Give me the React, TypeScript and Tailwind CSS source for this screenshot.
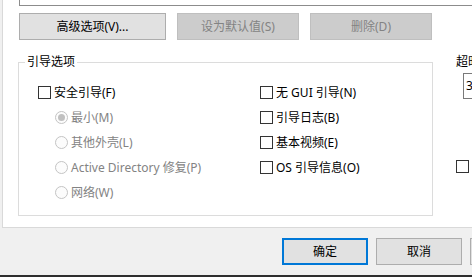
import React from "react";

const FONT = "font-['Noto_Sans','Noto_Sans_CJK_SC',sans-serif] text-[12px] leading-[16px]";

function Checkbox({ label }: { label: string }) {
  return (
    <div className="flex h-[25px] items-center gap-[3px] text-black">
      <span className="inline-block h-[13px] w-[13px] shrink-0 border border-[#333333] bg-white" />
      <span className="whitespace-nowrap">{label}</span>
    </div>
  );
}

function Radio({ label, checked }: { label: string; checked?: boolean }) {
  return (
    <div className="flex h-[25px] items-center gap-[3px] pl-[17px] text-[#838383]">
      <span className="flex h-[13px] w-[13px] shrink-0 items-center justify-center rounded-full border border-[#c4c4c4] bg-[#fcfcfc]">
        {checked && <span className="h-[7px] w-[7px] rounded-full bg-[#c0c0c0]" />}
      </span>
      <span className="whitespace-nowrap">{label}</span>
    </div>
  );
}

function Button({ label, disabled, w }: { label: string; disabled?: boolean; w: string }) {
  return (
    <div
      className={`flex h-[27px] shrink-0 items-center justify-center border ${w} ${
        disabled ? "border-[#bfbfbf] bg-[#cccccc] text-[#838383]" : "border-[#adadad] bg-[#e1e1e1] text-black"
      }`}
    >
      {label}
    </div>
  );
}

export default function App() {
  return (
    <div className={`flex h-[277px] w-[472px] flex-col overflow-hidden bg-[#f0f0f0] ${FONT}`}>
      <div className="ml-[2px] h-[228px] w-[520px] shrink-0 border-b border-l border-[#d9d9d9] bg-white">
        {/* list box bottom */}
        <div className="ml-[16px] h-[6px] border-b border-l border-[#8c8c8c] bg-white" />

        <div className="mt-[7px] flex gap-[11px] pl-[16px]">
          <Button label="高级选项(V)..." w="w-[147px]" />
          <Button label="设为默认值(S)" disabled w="w-[122px]" />
          <Button label="删除(D)" disabled w="w-[122px]" />
        </div>

        <div className="mt-[14px] flex items-start">
          <div className="relative ml-[15px] mt-[8px] h-[154px] w-[415px] shrink-0 border border-[#dcdcdc]">
            <span className="absolute left-[6px] top-[-9px] bg-white px-[2px] text-black">引导选项</span>
            <div className="grid grid-cols-[222px_1fr] pl-[19px] pt-[17px]">
              <div className="flex flex-col">
                <Checkbox label="安全引导(F)" />
                <Radio label="最小(M)" checked />
                <Radio label="其他外壳(L)" />
                <Radio label="Active Directory 修复(P)" />
                <Radio label="网络(W)" />
              </div>
              <div className="flex flex-col">
                <Checkbox label="无 GUI 引导(N)" />
                <Checkbox label="引导日志(B)" />
                <Checkbox label="基本视频(E)" />
                <Checkbox label="OS 引导信息(O)" />
              </div>
            </div>
          </div>

          <div className="ml-[23px] flex flex-col">
            <span className="text-black">超时(T):</span>
            <div className="ml-[7px] mt-[3px] flex h-[26px] w-[60px] items-center border border-[#7a7a7a] pl-[2px] text-black">
              30
            </div>
            <span className="mt-[61px] inline-block h-[13px] w-[13px] border border-[#333333] bg-white" />
          </div>
        </div>
      </div>

      <div className="mt-[10px] flex gap-[8px] pl-[282px]">
        <div className="flex h-[27px] w-[86px] shrink-0 items-center justify-center border-2 border-[#0078d7] bg-[#e1e1e1] text-black">
          确定
        </div>
        <Button label="取消" w="w-[86px]" />
        <Button label="应用(A)" w="w-[86px]" />
      </div>

      <div className="mt-auto h-[2px] shrink-0 bg-[#2e2e2e]" />
    </div>
  );
}
